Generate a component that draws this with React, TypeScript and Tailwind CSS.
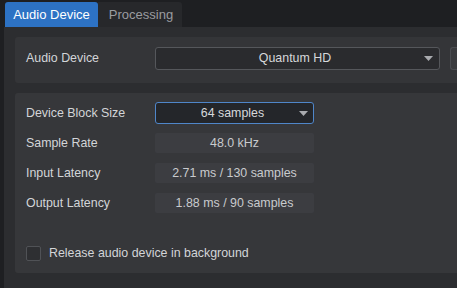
import { Check } from 'lucide-react';

// ── small bits ───────────────────────────────────────────────────────────────

function Caret() {
  return (
    <svg width="9" height="5" viewBox="0 0 9 5" className="shrink-0">
      <polygon points="0,0 9,0 4.5,5" fill="#a9abaf" />
    </svg>
  );
}

function Readout({ children }: { children: React.ReactNode }) {
  return (
    <div className="w-[159px] h-[20px] shrink-0 rounded-[2px] bg-[#3c3d41] flex items-center justify-center text-[#c9cbce]">
      {children}
    </div>
  );
}

function Row({ label, children }: { label: string; children: React.ReactNode }) {
  return (
    <div className="flex items-center h-[20px]">
      <div className="w-[129px] shrink-0 text-[#d3d5d8]">{label}</div>
      {children}
    </div>
  );
}

// ── App ──────────────────────────────────────────────────────────────────────

export default function App() {
  const released = false;

  return (
    <div
      className="w-[457px] h-[288px] bg-[#1e1f22] overflow-hidden flex flex-col text-[12.4px] leading-none"
      style={{ fontFamily: '"Liberation Sans", Arial, sans-serif' }}
    >
      {/* Tabs */}
      <div className="flex pl-[5px] pt-[2px] h-[27px] shrink-0 text-[13px]">
        <div className="w-[93px] bg-[#2d72c4] rounded-t-[3px] flex items-center justify-center text-white">
          Audio Device
        </div>
        <div className="w-[84px] bg-[#27282b] rounded-tr-[3px] flex items-center justify-center text-[#9a9ca0] pl-[2px]">
          Processing
        </div>
      </div>

      {/* Page */}
      <div className="flex-1 ml-[4px] bg-[#2c2d30] pl-[11px] pt-[10px] flex flex-col gap-[10px]">
        {/* Device panel */}
        <div className="h-[46px] bg-[#343538] rounded-l-[3px] pl-[11px] pb-[3px] flex items-center">
          <div className="w-[129px] shrink-0 text-[#d3d5d8]">Audio Device</div>
          <div className="w-[285px] h-[23px] shrink-0 rounded-[3px] border border-[#55575b] bg-[#2a2b2e] flex items-center pl-[10px] pr-[6px]">
            <span className="flex-1 text-center text-[#d6d8db]">Quantum HD</span>
            <Caret />
          </div>
          <div className="ml-[10px] w-[20px] h-[23px] shrink-0 rounded-l-[3px] border border-r-0 border-[#4a4c50] bg-[#3a3b3e]" />
        </div>

        {/* Settings panel */}
        <div className="h-[180px] bg-[#36373a] rounded-l-[3px] pl-[11px] pt-[10px] flex flex-col">
          <div className="flex flex-col gap-[10px]">
            <Row label="Device Block Size">
              <div className="w-[159px] h-[22px] shrink-0 rounded-[3px] border-[1.5px] border-[#4f86c9] bg-[#24262a] flex items-center pl-[10px] pr-[5px] -my-px">
                <span className="flex-1 text-center text-[#d6d8db]">64 samples</span>
                <Caret />
              </div>
            </Row>
            <Row label="Sample Rate">
              <Readout>48.0 kHz</Readout>
            </Row>
            <Row label="Input Latency">
              <Readout>2.71 ms / 130 samples</Readout>
            </Row>
            <Row label="Output Latency">
              <Readout>1.88 ms / 90 samples</Readout>
            </Row>
          </div>

          <label className="mt-[33px] flex items-center gap-[8px] text-[#d3d5d8]">
            <span className="w-[15px] h-[15px] shrink-0 rounded-[2px] border border-[#505256] bg-[#2e2f32] flex items-center justify-center">
              {released && <Check className="w-3 h-3 text-white" />}
            </span>
            Release audio device in background
          </label>
        </div>
      </div>
    </div>
  );
}
